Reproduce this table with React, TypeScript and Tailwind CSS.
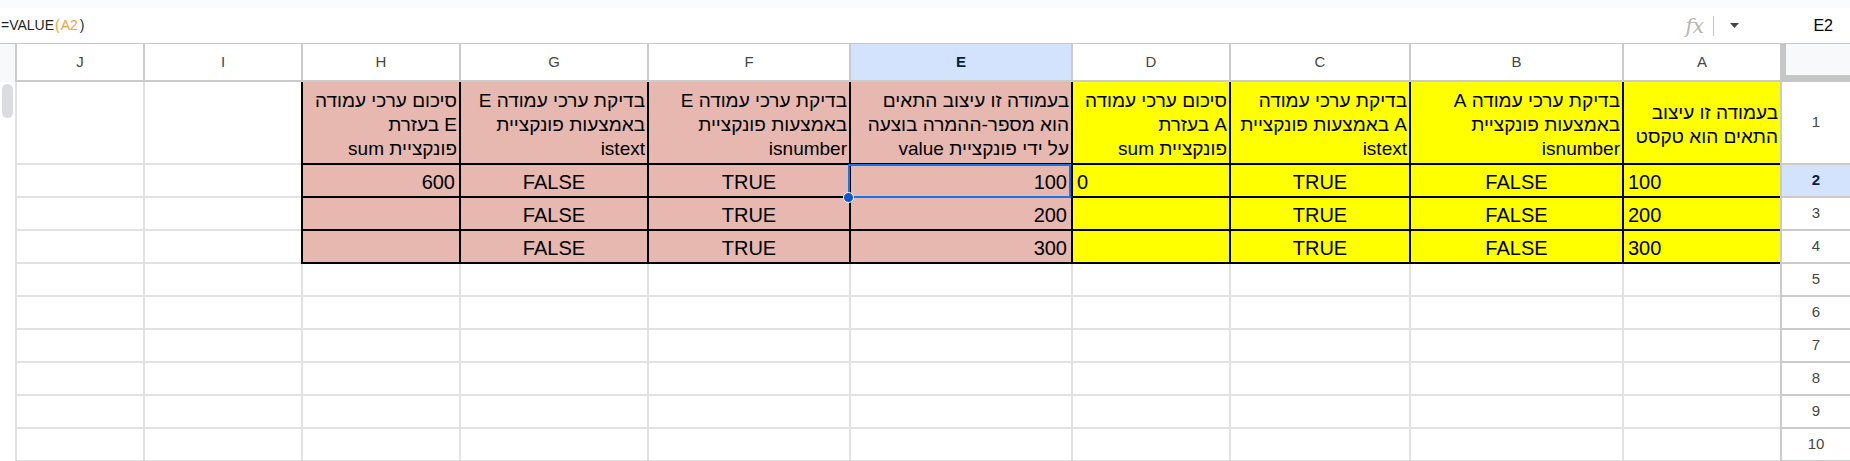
import React from 'react';

type Fill = 'none' | 'yellow' | 'pink';

interface Column {
  id: string;
  fill: Fill;
  title: string[];
  values: { text: string; align: 'left' | 'center' | 'right' }[];
}

const columns: Column[] = [
  { id: 'J', fill: 'none', title: [], values: [] },
  { id: 'I', fill: 'none', title: [], values: [] },
  {
    id: 'H',
    fill: 'pink',
    title: ['סיכום ערכי עמודה', 'E בעזרת', 'פונקציית sum'],
    values: [
      { text: '600', align: 'right' },
      { text: '', align: 'right' },
      { text: '', align: 'right' },
    ],
  },
  {
    id: 'G',
    fill: 'pink',
    title: ['בדיקת ערכי עמודה E', 'באמצעות פונקציית', 'istext'],
    values: [
      { text: 'FALSE', align: 'center' },
      { text: 'FALSE', align: 'center' },
      { text: 'FALSE', align: 'center' },
    ],
  },
  {
    id: 'F',
    fill: 'pink',
    title: ['בדיקת ערכי עמודה E', 'באמצעות פונקציית', 'isnumber'],
    values: [
      { text: 'TRUE', align: 'center' },
      { text: 'TRUE', align: 'center' },
      { text: 'TRUE', align: 'center' },
    ],
  },
  {
    id: 'E',
    fill: 'pink',
    title: ['בעמודה זו עיצוב התאים', 'הוא מספר-ההמרה בוצעה', 'על ידי פונקציית value'],
    values: [
      { text: '100', align: 'right' },
      { text: '200', align: 'right' },
      { text: '300', align: 'right' },
    ],
  },
  {
    id: 'D',
    fill: 'yellow',
    title: ['סיכום ערכי עמודה', 'A בעזרת', 'פונקציית sum'],
    values: [
      { text: '0', align: 'left' },
      { text: '', align: 'left' },
      { text: '', align: 'left' },
    ],
  },
  {
    id: 'C',
    fill: 'yellow',
    title: ['בדיקת ערכי עמודה', 'A באמצעות פונקציית', 'istext'],
    values: [
      { text: 'TRUE', align: 'center' },
      { text: 'TRUE', align: 'center' },
      { text: 'TRUE', align: 'center' },
    ],
  },
  {
    id: 'B',
    fill: 'yellow',
    title: ['בדיקת ערכי עמודה A', 'באמצעות פונקציית', 'isnumber'],
    values: [
      { text: 'FALSE', align: 'center' },
      { text: 'FALSE', align: 'center' },
      { text: 'FALSE', align: 'center' },
    ],
  },
  {
    id: 'A',
    fill: 'yellow',
    title: ['בעמודה זו עיצוב', 'התאים הוא טקסט'],
    values: [
      { text: '100', align: 'left' },
      { text: '200', align: 'left' },
      { text: '300', align: 'left' },
    ],
  },
];

const alignClass = {
  left: 'justify-start pl-[4px]',
  center: 'justify-center',
  right: 'justify-end pr-[4px]',
};

function cellClass(col: Column, row: number) {
  // rows 1-4 of filled columns carry the black table borders
  if (col.fill !== 'none' && row <= 4) {
    const bg = col.fill === 'yellow' ? 'bg-[#ffff00]' : 'bg-[#e6b8af]';
    return `${bg} border-l-2 border-b-2 border-black`;
  }
  return 'bg-white border-l-2 border-b-2 border-[#e2e2e2]';
}

function FormulaBar() {
  return (
    <div className="flex h-[36px] items-center border-b border-[#c4c7c5] bg-white">
      <div className="flex-1 pl-[1px] text-[14px] text-[#1f1f1f]">
        <span>=VALUE</span>
        <span className="ml-[1px] text-[#f1a33b]">(</span>
        <span className="ml-[1px] text-[#f1a33b]">A2</span>
        <span className="ml-[2px] text-[#1f2a4a]">)</span>
      </div>
      <span
        className="w-[24px] text-[20px] italic text-[#b4b4b4]"
        style={{ fontFamily: '"DejaVu Serif", serif' }}
      >
        fx
      </span>
      <div className="ml-[4px] h-[20px] w-px bg-[#c4c7c5]" />
      <svg className="ml-[16px]" width="9" height="5" viewBox="0 0 9 5">
        <path d="M0 0h9L4.5 5z" fill="#444746" />
      </svg>
      <div className="ml-[74px] mr-[17px] text-[16px] text-black">E2</div>
    </div>
  );
}

export default function App() {
  const rows = Array.from({ length: 10 }, (_, i) => i + 1);

  return (
    <div
      className="h-[461px] w-[1850px] overflow-hidden bg-white"
      style={{ fontFamily: 'Arial, "Liberation Sans", sans-serif' }}
    >
      <div className="h-[8px] bg-[#f9fbfd]" />
      <FormulaBar />

      <div className="grid grid-cols-[15px_128px_158px_158px_188px_202px_222px_158px_180px_213px_158px_70px] grid-rows-[38px_83px_repeat(9,33px)]">
        {/* column headers */}
        <div className="bg-[#f8f9fa]" />
        {columns.map((col) => (
          <div
            key={col.id}
            className={`flex items-center justify-center border-l-2 border-b-2 border-[#c9cccb] text-[15px] ${
              col.id === 'E' ? 'bg-[#d3e3fd] font-bold text-[#041e49]' : 'bg-white text-[#444746]'
            }`}
          >
            {col.id}
          </div>
        ))}
        <div className="border-l-[6px] border-b-[7px] border-[#c4c7c5] bg-[#f8f9fa]" />

        {rows.map((row) => (
          <React.Fragment key={row}>
            <div className="bg-white">
              {row === 1 && <div className="mx-[2px] mt-[2px] h-[34px] rounded-full bg-[#dadce0]" />}
            </div>

            {columns.map((col) => {
              if (row === 1) {
                return (
                  <div
                    key={col.id}
                    dir="rtl"
                    className={`${cellClass(col, row)} flex flex-col justify-center overflow-hidden pt-[4px] pr-[2px] text-[19px] leading-[24px] text-black`}
                  >
                    {col.title.map((line) => (
                      <div key={line} className="whitespace-nowrap text-right">
                        {line}
                      </div>
                    ))}
                  </div>
                );
              }
              const v = col.values[row - 2];
              const selected = col.id === 'E' && row === 2;
              return (
                <div
                  key={col.id}
                  className={`${cellClass(col, row)} flex items-end pb-[2px] text-[20px] leading-[24px] text-black ${
                    v ? alignClass[v.align] : ''
                  } ${selected ? 'relative' : ''}`}
                >
                  {v?.text}
                  {selected && (
                    <div className="absolute -left-[3px] -top-[1px] right-0 -bottom-[2px] z-10 border-2 border-[#1a73e8]">
                      <div className="absolute -left-[7px] -bottom-[7px] h-[11px] w-[11px] rounded-full border border-white bg-[#0b57d0]" />
                    </div>
                  )}
                </div>
              );
            })}

            <div
              className={`flex items-center justify-center border-l-2 border-b-2 border-[#c9cccb] text-[15px] ${
                row === 2 ? 'bg-[#d3e3fd] font-bold text-[#041e49]' : 'bg-white text-[#444746]'
              }`}
            >
              {row}
            </div>
          </React.Fragment>
        ))}
      </div>
    </div>
  );
}
